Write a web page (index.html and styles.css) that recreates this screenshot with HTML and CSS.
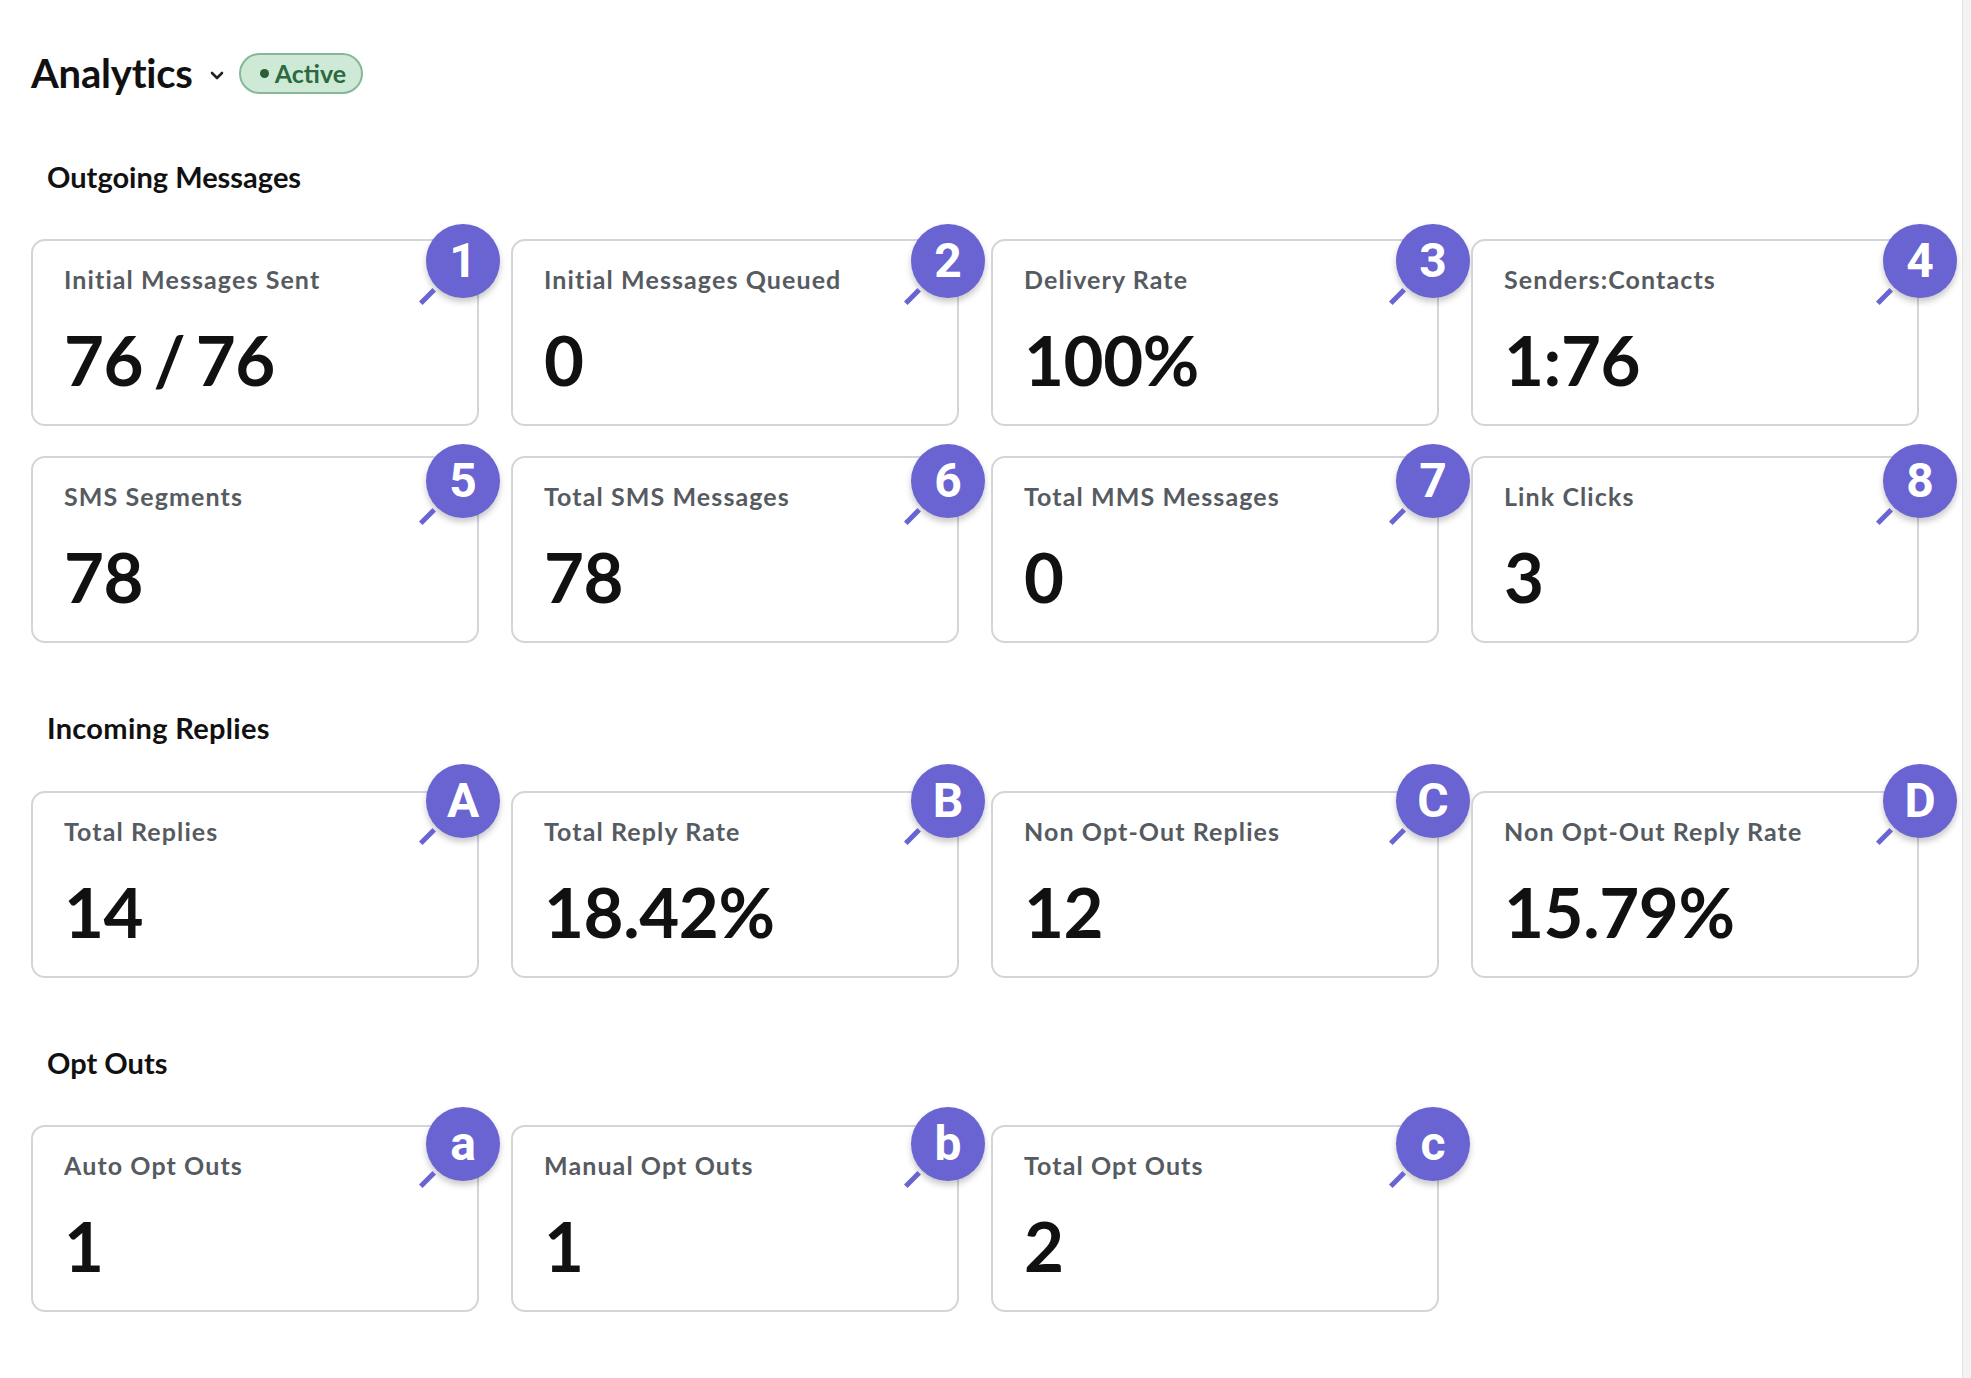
FILE: index.html
```html
<!DOCTYPE html>
<html lang="en">
<head>
  <meta charset="UTF-8">
  <meta name="viewport" content="width=device-width, initial-scale=1.0">
  <title>Campaign Analytics</title>
  <link rel="stylesheet" href="styles.css">
</head>
<body>
  <main class="page">
    <div class="page-header">
      <h1>Analytics</h1>
      <svg class="chevron" width="14" height="9" viewBox="0 0 14 9">
        <path d="M2 2l5 5 5-5" fill="none" stroke="#222" stroke-width="2.6" stroke-linecap="round" stroke-linejoin="round"/>
      </svg>
      <span class="status-pill"><span class="status-dot"></span>Active</span>
    </div>

    <section class="stats-section outgoing">
      <h2>Outgoing Messages</h2>
      <div class="stats-grid">
        <div class="stat-card">
          <div class="stat-label">Initial Messages Sent</div>
          <div class="stat-value">76 / 76</div>
          <span class="marker">1</span>
        </div>
        <div class="stat-card">
          <div class="stat-label">Initial Messages Queued</div>
          <div class="stat-value">0</div>
          <span class="marker">2</span>
        </div>
        <div class="stat-card">
          <div class="stat-label">Delivery Rate</div>
          <div class="stat-value">100%</div>
          <span class="marker">3</span>
        </div>
        <div class="stat-card">
          <div class="stat-label">Senders:Contacts</div>
          <div class="stat-value">1:76</div>
          <span class="marker">4</span>
        </div>
        <div class="stat-card">
          <div class="stat-label">SMS Segments</div>
          <div class="stat-value">78</div>
          <span class="marker">5</span>
        </div>
        <div class="stat-card">
          <div class="stat-label">Total SMS Messages</div>
          <div class="stat-value">78</div>
          <span class="marker">6</span>
        </div>
        <div class="stat-card">
          <div class="stat-label">Total MMS Messages</div>
          <div class="stat-value">0</div>
          <span class="marker">7</span>
        </div>
        <div class="stat-card">
          <div class="stat-label">Link Clicks</div>
          <div class="stat-value">3</div>
          <span class="marker">8</span>
        </div>
      </div>
    </section>

    <section class="stats-section replies">
      <h2>Incoming Replies</h2>
      <div class="stats-grid">
        <div class="stat-card">
          <div class="stat-label">Total Replies</div>
          <div class="stat-value">14</div>
          <span class="marker">A</span>
        </div>
        <div class="stat-card">
          <div class="stat-label">Total Reply Rate</div>
          <div class="stat-value">18.42%</div>
          <span class="marker">B</span>
        </div>
        <div class="stat-card">
          <div class="stat-label">Non Opt-Out Replies</div>
          <div class="stat-value">12</div>
          <span class="marker">C</span>
        </div>
        <div class="stat-card">
          <div class="stat-label">Non Opt-Out Reply Rate</div>
          <div class="stat-value">15.79%</div>
          <span class="marker">D</span>
        </div>
      </div>
    </section>

    <section class="stats-section optouts">
      <h2>Opt Outs</h2>
      <div class="stats-grid">
        <div class="stat-card">
          <div class="stat-label">Auto Opt Outs</div>
          <div class="stat-value">1</div>
          <span class="marker">a</span>
        </div>
        <div class="stat-card">
          <div class="stat-label">Manual Opt Outs</div>
          <div class="stat-value">1</div>
          <span class="marker">b</span>
        </div>
        <div class="stat-card">
          <div class="stat-label">Total Opt Outs</div>
          <div class="stat-value">2</div>
          <span class="marker">c</span>
        </div>
      </div>
    </section>
  </main>
  <div class="scroll-track"></div>
</body>
</html>
```

FILE: styles.css
```css
body {
  margin: 0;
  display: flex;
  min-height: 100vh;
  background-color: #fff;
  font-family: 'Lato', 'Noto Sans', sans-serif;
  color: #111;
}

.page {
  flex: 1;
  padding: 49px 31px 60px;
}

.scroll-track {
  width: 8px;
  background-color: #f3f3f3;
  border-left: 1px solid #e3e3e3;
}

/* header */

.page-header {
  display: flex;
  align-items: center;
}

.page-header h1 {
  margin: 0;
  font-size: 40px;
  font-weight: 700;
  line-height: 1.2;
  letter-spacing: -0.2px;
  color: #111;
}

.chevron {
  margin: 4px 15px 0 17px;
}

.status-pill {
  display: flex;
  align-items: center;
  gap: 6px;
  box-sizing: border-box;
  height: 41px;
  padding: 0 15px 0 19px;
  border: 2px solid #86b897;
  border-radius: 21px;
  background-color: #cfe9d7;
  color: #2b6a3e;
  font-size: 25px;
  font-weight: 700;
}

.status-dot {
  width: 9px;
  height: 9px;
  border-radius: 50%;
  background-color: #2a5e39;
}

/* sections */

.stats-section {
  margin-top: 67px;
}

.stats-section.outgoing {
  margin-top: 62px;
}

.stats-section h2 {
  margin: 0 0 44px 16px;
  font-size: 29px;
  font-weight: 700;
  line-height: 1.25;
  color: #111;
}

.stats-section.replies h2 {
  letter-spacing: 0.3px;
}

.stats-grid {
  display: grid;
  grid-template-columns: repeat(4, 448px);
  column-gap: 32px;
  row-gap: 30px;
}

.stat-card {
  position: relative;
  padding: 24px 31px 29px;
  border: 2px solid #d3d5d9;
  border-radius: 14px;
  background-color: #fff;
}

.stat-label {
  margin-bottom: 31px;
  font-size: 25px;
  font-weight: 700;
  line-height: 29px;
  letter-spacing: 1.1px;
  color: #565b61;
}

.stat-value {
  font-size: 69px;
  font-weight: 700;
  line-height: 70px;
  letter-spacing: -0.4px;
  word-spacing: -6px;
  color: #111;
}

/* numbered callouts */

.marker {
  position: absolute;
  top: -17px;
  right: -23px;
  width: 74px;
  height: 74px;
  border-radius: 50%;
  background-color: #6964d1;
  box-shadow: 0 4px 6px rgba(0, 0, 0, 0.22);
  display: flex;
  align-items: center;
  justify-content: center;
  color: #fff;
  font-family: 'Roboto', sans-serif;
  font-size: 48px;
  font-weight: 700;
  line-height: 1;
  letter-spacing: 0;
  word-spacing: 0;
}

.marker::after {
  content: '';
  position: absolute;
  left: -8px;
  top: 70px;
  width: 19px;
  height: 5px;
  background-color: #6964d1;
  transform: rotate(-45deg);
}

.stat-card:nth-child(4n+2) .marker { right: -28px; }
.stat-card:nth-child(4n+3) .marker { right: -33px; }
.stat-card:nth-child(4n+4) .marker { right: -40px; }

.outgoing .stat-card:nth-child(n+5) .marker { top: -14px; }
.replies .marker { top: -29px; }
.optouts .marker { top: -20px; }
```
